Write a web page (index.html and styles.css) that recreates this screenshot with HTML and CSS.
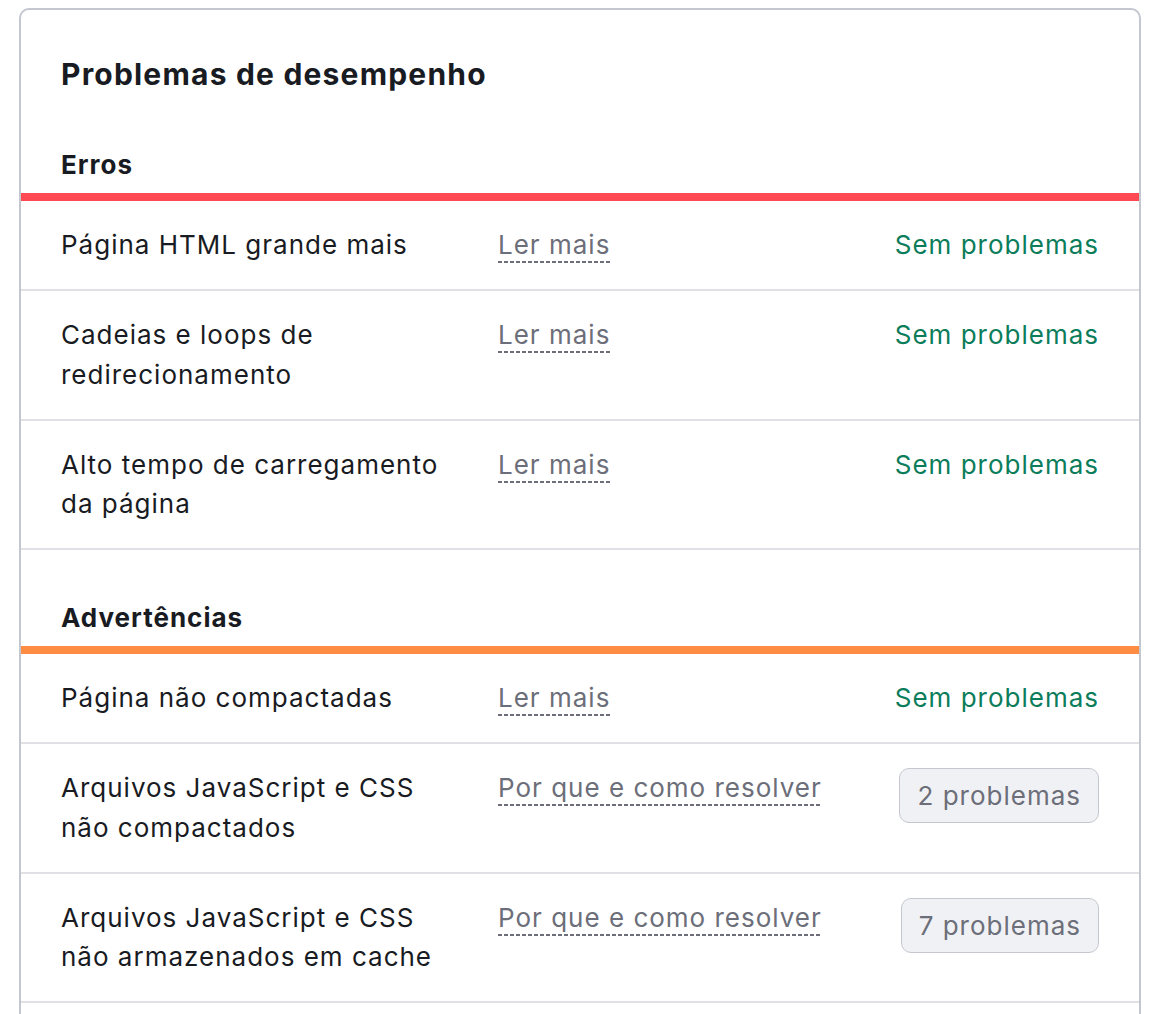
FILE: index.html
```html
<!DOCTYPE html>
<html lang="pt">
<head>
<meta charset="utf-8">
<title>Problemas de desempenho</title>
<link rel="stylesheet" href="styles.css">
</head>
<body>
<section class="card">
  <h2 class="card-title">Problemas de desempenho</h2>

  <h3 class="group-title group-title-first">Erros</h3>
  <div class="bar bar-error"></div>
  <div class="row">
    <div class="name">Página HTML grande mais</div>
    <div class="info"><span class="link">Ler mais</span></div>
    <div class="status"><span class="ok">Sem problemas</span></div>
  </div>
  <div class="row">
    <div class="name">Cadeias e loops de redirecionamento</div>
    <div class="info"><span class="link">Ler mais</span></div>
    <div class="status"><span class="ok">Sem problemas</span></div>
  </div>
  <div class="row">
    <div class="name">Alto tempo de carregamento da página</div>
    <div class="info"><span class="link">Ler mais</span></div>
    <div class="status"><span class="ok">Sem problemas</span></div>
  </div>

  <h3 class="group-title">Advertências</h3>
  <div class="bar bar-warning"></div>
  <div class="row">
    <div class="name">Página não compactadas</div>
    <div class="info"><span class="link">Ler mais</span></div>
    <div class="status"><span class="ok">Sem problemas</span></div>
  </div>
  <div class="row">
    <div class="name">Arquivos JavaScript e CSS não compactados</div>
    <div class="info"><span class="link">Por que e como resolver</span></div>
    <div class="status"><span class="badge">2 problemas</span></div>
  </div>
  <div class="row">
    <div class="name">Arquivos JavaScript e CSS não armazenados em cache</div>
    <div class="info"><span class="link">Por que e como resolver</span></div>
    <div class="status"><span class="badge">7 problemas</span></div>
  </div>
</section>
</body>
</html>
```

FILE: styles.css
```css
html, body {
  margin: 0;
  padding: 0;
  background: #ffffff;
}

body {
  font-family: Inter, "Noto Sans", "Liberation Sans", sans-serif;
  color: #191b23;
  font-size: 26px;
  line-height: 39.5px;
  letter-spacing: 1px;
}

.card {
  margin: 8px 25px 0 19px;
  border: 2px solid #c4c7cf;
  border-radius: 10px;
  background: #ffffff;
  padding-top: 46px;
  padding-bottom: 60px;
}

.card-title {
  margin: 0;
  padding: 0 40px;
  font-size: 30px;
  line-height: 36px;
  font-weight: 700;
  letter-spacing: 1.2px;
}

.group-title {
  margin: 52px 0 0;
  padding: 0 40px 12px;
  font-size: 26px;
  line-height: 32px;
  font-weight: 700;
}

.group-title-first {
  margin-top: 57px;
}

.bar {
  height: 8px;
}

.bar-error {
  background: #ff4953;
}

.bar-warning {
  background: #ff8c43;
}

.row {
  display: grid;
  grid-template-columns: 390px 1fr auto;
  column-gap: 47px;
  align-items: start;
  padding: 24.25px 40px;
  border-bottom: 2px solid #e0e1e6;
}

.name {
  color: #191b23;
}

.link {
  color: #6c6e79;
  padding-bottom: 3px;
  background-image: repeating-linear-gradient(to right, #6c6e79 0 4px, transparent 4px 6px);
  background-repeat: no-repeat;
  background-size: 100% 2px;
  background-position: left bottom;
}

.status {
  text-align: right;
}

.ok {
  color: #0c7d5b;
}

.badge {
  display: inline-block;
  box-sizing: border-box;
  height: 55px;
  padding: 0 17px;
  line-height: 53px;
  border: 1px solid #c4c7cf;
  border-radius: 10px;
  background: #f0f1f4;
  color: #6c6e79;
  font-size: 26px;
}
```
